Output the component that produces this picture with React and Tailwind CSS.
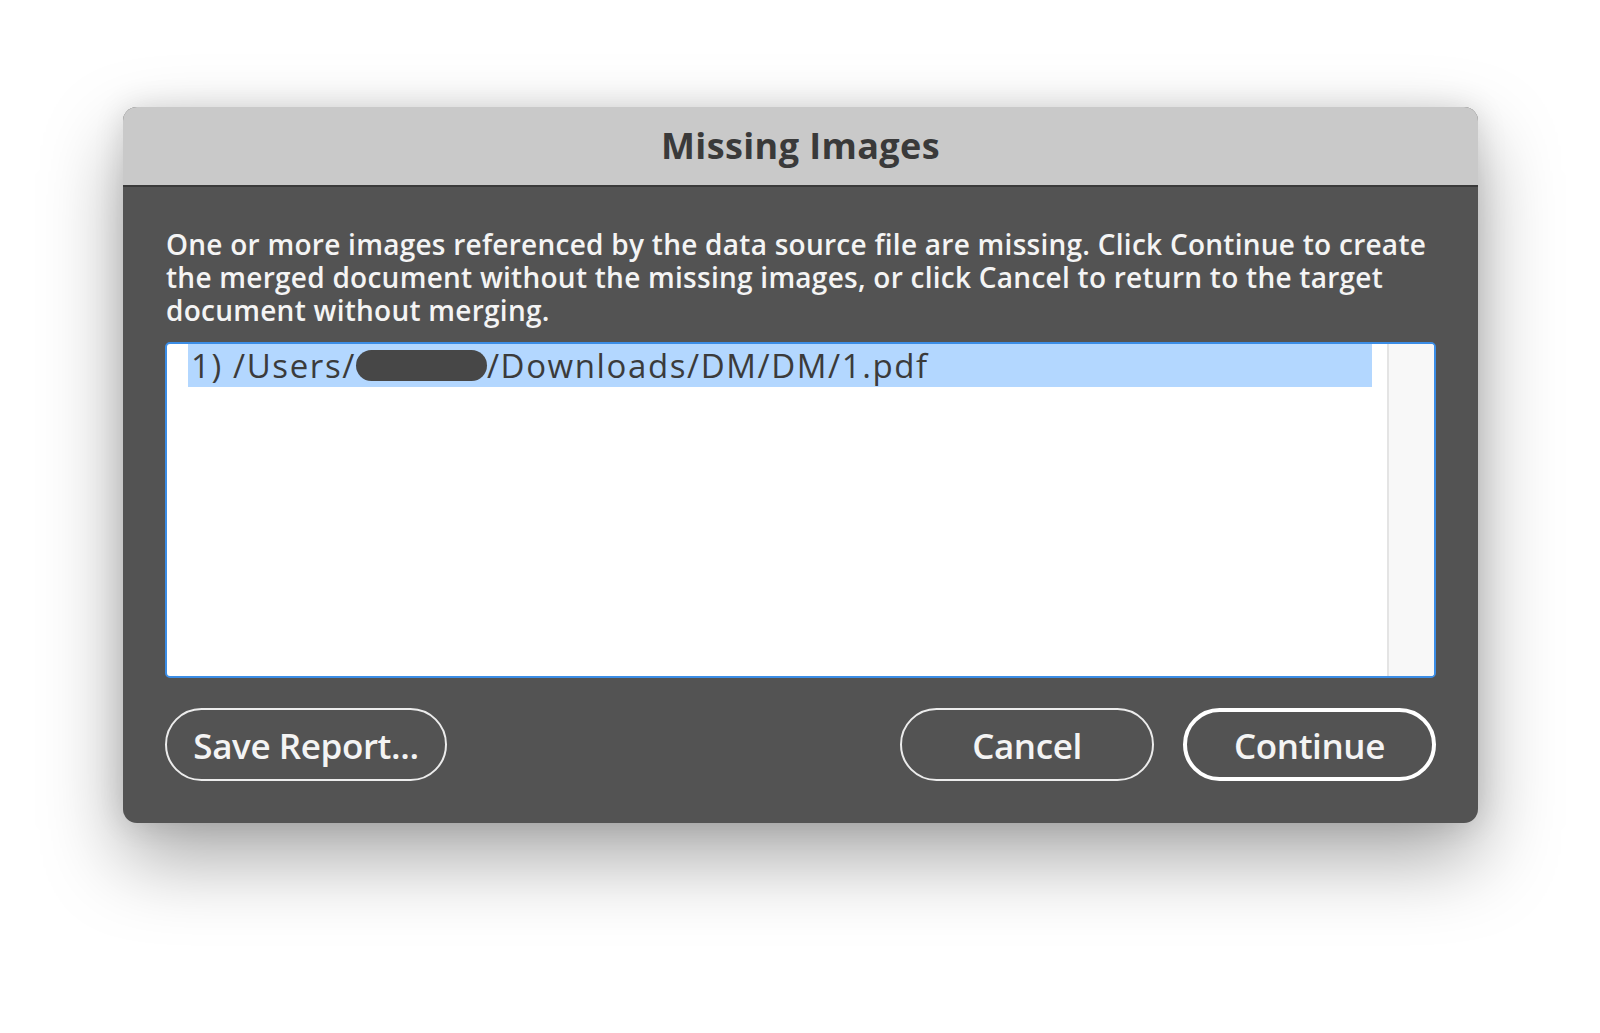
export default function App() {
  const font = { fontFamily: '"Open Sans", "Noto Sans", sans-serif' };
  return (
    <div className="w-[1600px] h-[1033px] bg-white overflow-hidden pt-[107px] pl-[123px]" style={font}>
      <div className="w-[1355px] h-[716px] rounded-[14px] overflow-hidden bg-[#535353] flex flex-col shadow-[0_35px_80px_rgba(0,0,0,0.35),0_0_30px_rgba(0,0,0,0.12)]">
        <div className="h-[80px] shrink-0 bg-[#c9c9c9] border-b-2 border-[#3a3a3a] flex items-center justify-center">
          <span className="text-[36px] font-bold text-[#3a3a3a] leading-none tracking-[0.4px]">Missing Images</span>
        </div>
        <div className="flex-1 flex flex-col px-[42px] pt-[41px]">
          <p className="pl-[1px] text-[28px] leading-[33px] font-semibold tracking-[0.26px] text-[#f4f4f4] whitespace-nowrap">
            One or more images referenced by the data source file are missing. Click Continue to create
            <br />
            the merged document without the missing images, or click Cancel to return to the target
            <br />
            document without merging.
          </p>
          <div className="mt-[15px] h-[336px] border-2 border-[#3b8de6] rounded-[5px] bg-white flex overflow-hidden">
            <div className="flex-1 pl-[21px] pr-[15px]">
              <div className="h-[43px] bg-[#b3d7ff] pl-[3px] flex items-center text-[33px] leading-[43px] tracking-[1.6px] text-[#3b3b3b] whitespace-nowrap">
                <span>1) /Users/</span>
                <span className="inline-block w-[131px] h-[31px] rounded-full bg-[#474747]"></span>
                <span>/Downloads/DM/DM/1.pdf</span>
              </div>
            </div>
            <div className="w-[47px] shrink-0 border-l-2 border-[#e4e4e4] bg-[#f8f8f8]"></div>
          </div>
          <div className="mt-[30px] flex items-center">
            <button className="w-[282px] h-[73px] pt-[3px] rounded-full border-2 border-[#ececec] text-[35px] font-semibold tracking-[-0.4px] text-[#f4f4f4] flex items-center justify-center">
              Save Report...
            </button>
            <div className="flex-1"></div>
            <button className="w-[254px] h-[73px] pt-[3px] rounded-full border-2 border-[#ececec] text-[35px] font-semibold tracking-[-0.4px] text-[#f4f4f4] flex items-center justify-center">
              Cancel
            </button>
            <button className="ml-[29px] w-[253px] h-[73px] pt-[3px] rounded-full border-[4px] border-white text-[35px] font-semibold tracking-[-0.4px] text-[#f4f4f4] flex items-center justify-center">
              Continue
            </button>
          </div>
        </div>
      </div>
    </div>
  );
}
